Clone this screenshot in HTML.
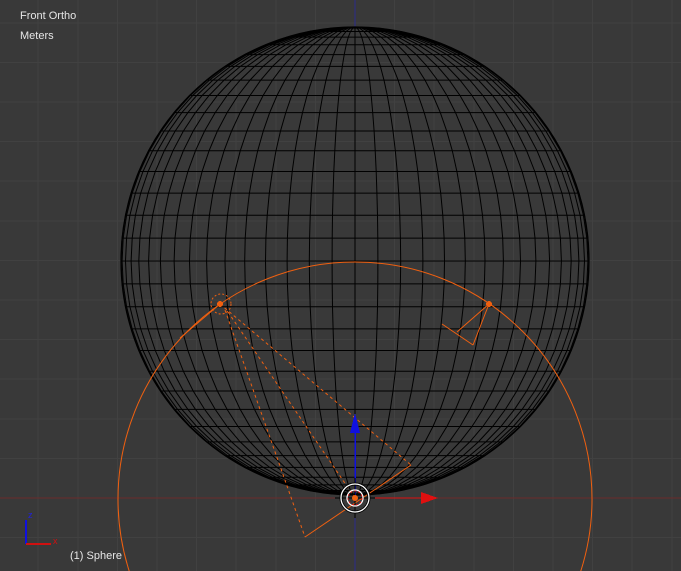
<!DOCTYPE html>
<html><head><meta charset="utf-8"><style>
html,body{margin:0;padding:0;background:#393939;width:681px;height:571px;overflow:hidden;position:relative}
svg{position:absolute;left:0;top:0}
.t{position:absolute;color:#e6e6e6;font:11px/13px "Liberation Sans",sans-serif;white-space:nowrap}
</style></head><body>
<svg id="s" width="681" height="571" viewBox="0 0 681 571" shape-rendering="crispEdges"></svg>
<div class="t" style="left:20px;top:10px">Front Ortho</div>
<div class="t" style="left:20px;top:30px">Meters</div>
<div class="t" style="left:70px;top:550px">(1) Sphere</div>
<script>
var s=document.getElementById('s'),h='';
var ox=355,oy=498,g=39.6;
for(var x=ox%g;x<681;x+=g)h+='<line x1="'+x.toFixed(1)+'" y1="0" x2="'+x.toFixed(1)+'" y2="571" stroke="#414141"/>';
for(var y=oy%g;y<571;y+=g)h+='<line x1="0" y1="'+y.toFixed(1)+'" x2="681" y2="'+y.toFixed(1)+'" stroke="#414141"/>';
h+='<line x1="0" y1="'+oy+'" x2="681" y2="'+oy+'" stroke="#6a2a2a"/>';
h+='<line x1="'+ox+'" y1="0" x2="'+ox+'" y2="571" stroke="#2a2a8a"/>';
var cx=355,cy=261,R=234,rings=32,seg=64,p='';
for(var i=1;i<rings;i++){var t=Math.PI*i/rings;var yy=cy-R*Math.cos(t),w=R*Math.sin(t);p+='M'+(cx-w).toFixed(1)+' '+yy.toFixed(1)+'H'+(cx+w).toFixed(1);}
for(var k=0;k<seg;k++){var ph=2*Math.PI*k/seg;if(Math.cos(ph)<-1e-9)continue;var d='';for(var j=0;j<=rings;j++){var t=Math.PI*j/rings;var xx=cx+R*Math.sin(t)*Math.sin(ph),yy=cy-R*Math.cos(t);d+=(j?'L':'M')+xx.toFixed(1)+' '+yy.toFixed(1);}p+=d;}
h+='<path d="'+p+'" fill="none" stroke="#000" stroke-width="1" shape-rendering="auto"/>';
h+='<circle cx="'+cx+'" cy="'+cy+'" r="'+R+'" fill="none" stroke="#000" stroke-width="1.2" shape-rendering="auto"/>';
var O='#f06010';
h+='<g shape-rendering="auto" fill="none" stroke="'+O+'" stroke-width="1">';
h+='<circle cx="355" cy="499" r="237"/>';
h+='<path d="M220 304L180 338M305 537L411 465M489 304L473 345M489 304L457 332M442 324L473 345"/>';
h+='<path stroke-dasharray="3 3" d="M225 310L305 537M220 304L411 465M228 312L355 498"/>';
h+='<circle cx="221" cy="304" r="10" stroke-dasharray="2 2"/>';
h+='</g>';
h+='<circle cx="220" cy="304" r="3" fill="'+O+'"/><circle cx="489" cy="304" r="3" fill="'+O+'"/>';
h+='<line x1="355" y1="498" x2="355" y2="420" stroke="#1010e0" stroke-width="1.5"/><polygon points="355,413 350,433 360,433" fill="#1010e0"/>';
h+='<line x1="355" y1="498" x2="425" y2="498" stroke="#e01010"/><polygon points="421,492 421,504 438,498" fill="#e01010"/>';
h+='<g shape-rendering="auto"><path d="M335 498H375M355 478V518" stroke="#000"/>';
h+='<circle cx="355" cy="498" r="14" fill="none" stroke="#000" stroke-width="3"/><circle cx="355" cy="498" r="14" fill="none" stroke="#fff" stroke-width="1.3"/>';
h+='<circle cx="355" cy="498" r="8" fill="none" stroke="#fff" stroke-width="1.3"/><circle cx="355" cy="498" r="7" fill="none" stroke="#e01010" stroke-dasharray="2 2"/>';
h+='<circle cx="355" cy="498" r="3" fill="'+O+'"/></g>';
h+='<line x1="26" y1="520" x2="26" y2="544" stroke="#1010e0" stroke-width="2"/><line x1="26" y1="544" x2="51" y2="544" stroke="#d01010" stroke-width="2"/>';
h+='<text x="28" y="518" fill="#2020e0" font-family="Liberation Sans,sans-serif" font-size="9">z</text><text x="53" y="544" fill="#d01010" font-family="Liberation Sans,sans-serif" font-size="9">x</text>';
s.innerHTML=h;
</script>
</body></html>
